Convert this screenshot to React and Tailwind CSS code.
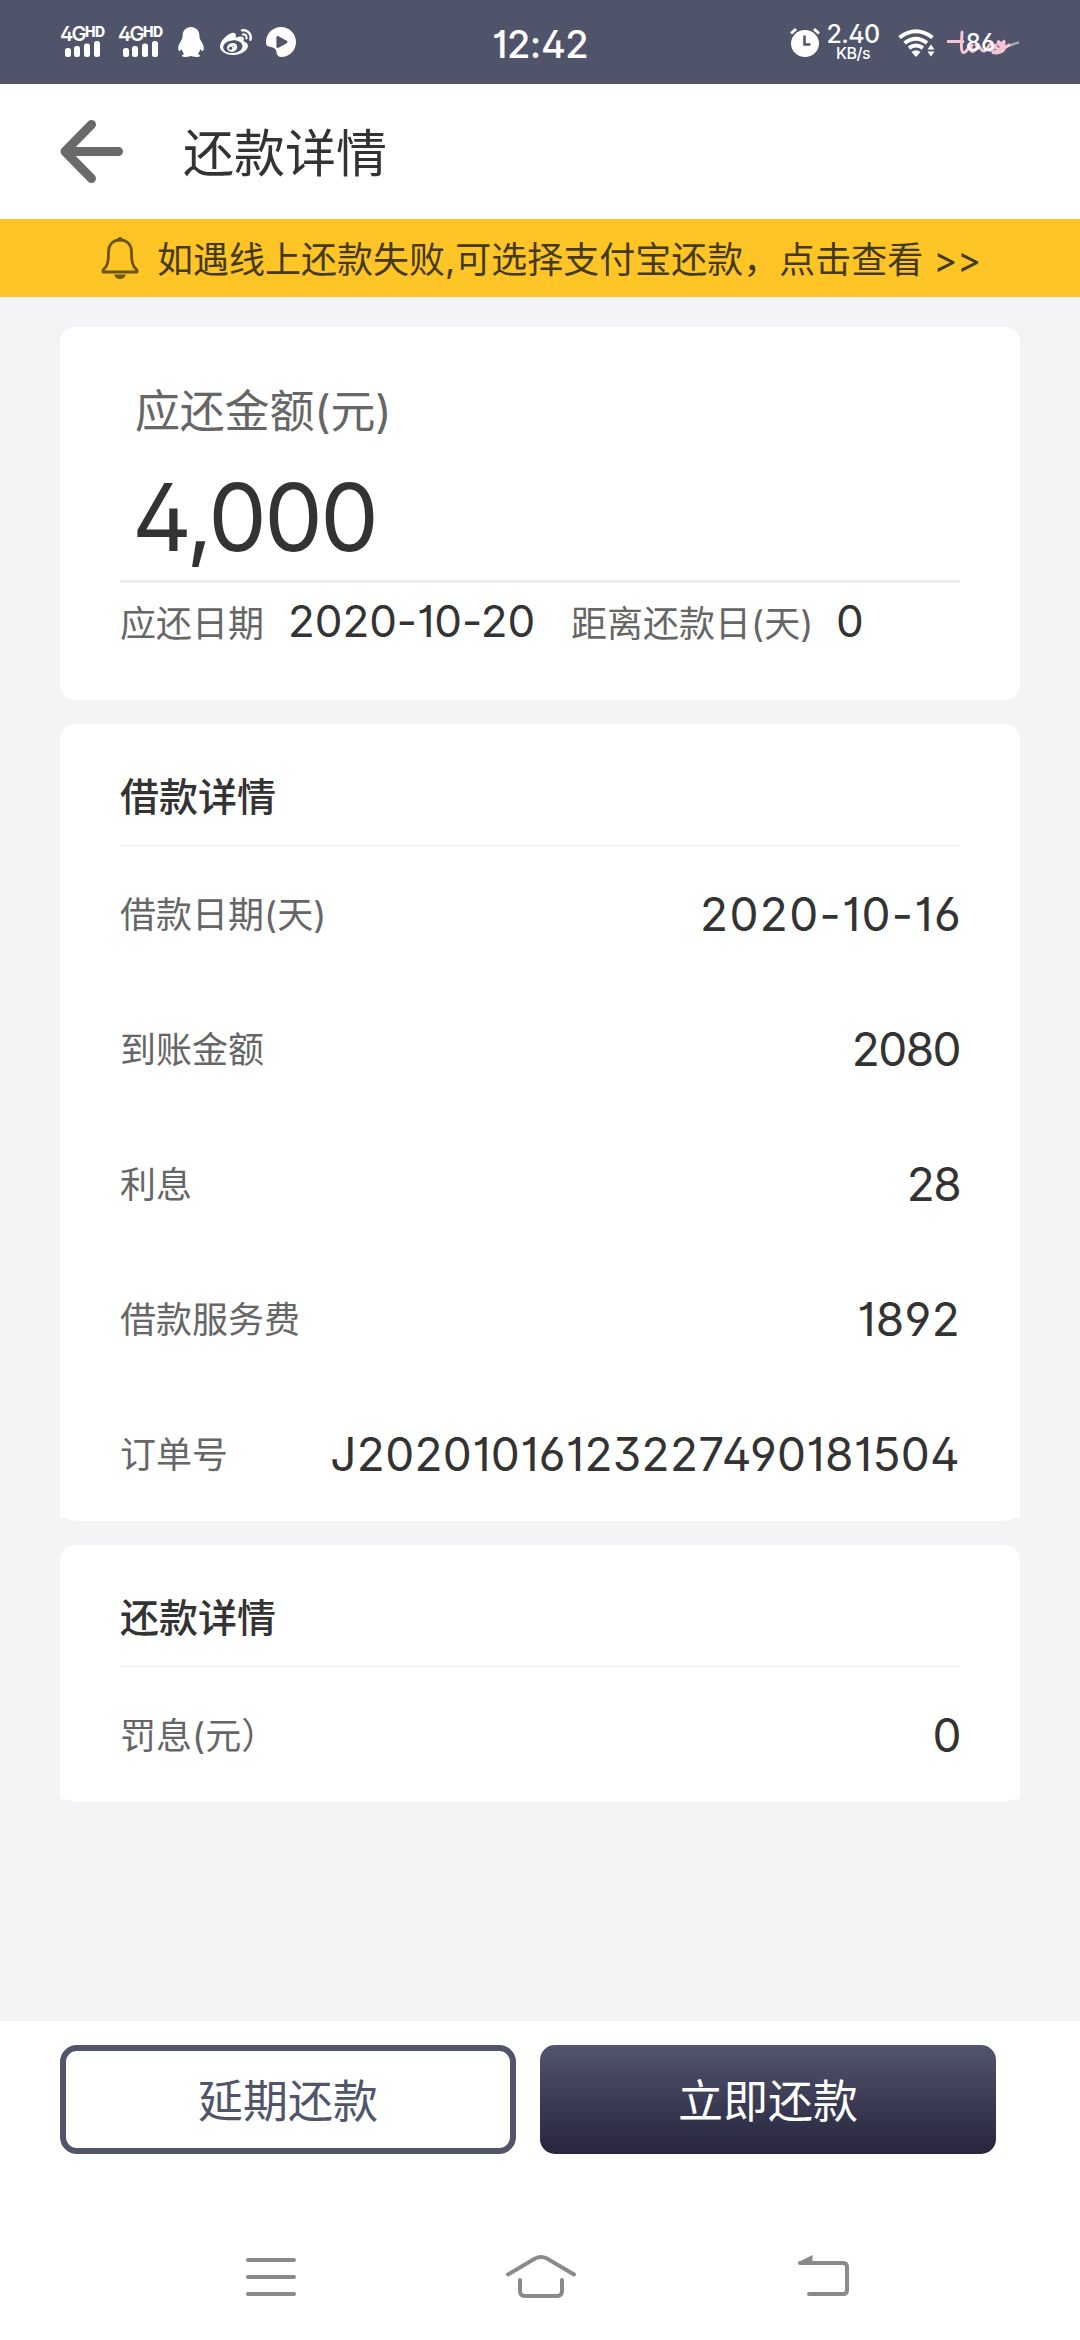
import { FaWeibo } from 'react-icons/fa';

const LOAN_ROWS = [
  { label: '借款日期(天)', value: '2020-10-16', spacing: 'tracking-[1.3px] -mr-[2px]' },
  { label: '到账金额', value: '2080', spacing: 'tracking-[-1.6px]' },
  { label: '利息', value: '28', spacing: 'tracking-[-1.6px]' },
  { label: '借款服务费', value: '1892', spacing: 'tracking-[0.3px]' },
  { label: '订单号', value: 'J20201016123227490181504', spacing: 'tracking-[0.3px]' },
];

const REPAY_ROWS = [{ label: '罚息(元）', value: '0', spacing: 'tracking-[-1.6px]' }];

const Signal = () => (
  <div className="w-[46px] h-[30px] flex flex-col">
    <div className="h-[15px] flex items-start whitespace-nowrap">
      <span className="w-[25px] text-[20px] leading-[15px] font-semibold tracking-[-1.8px]">4G</span>
      <span className="text-[14px] leading-[10px] font-extrabold tracking-[-0.4px]">HD</span>
    </div>
    <svg width="46" height="16" viewBox="0 0 46 16" fill="currentColor" className="-mt-px">
      <rect x="5" y="7" width="6" height="9" rx="2.5" />
      <rect x="14" y="5" width="6" height="11" rx="2.5" />
      <rect x="24" y="2.5" width="6" height="13.5" rx="2.5" />
      <rect x="34" y="0" width="6" height="16" rx="2.5" />
    </svg>
  </div>
);

const PenguinIcon = () => (
  <svg width="26" height="30" viewBox="0 0 26 30" fill="currentColor">
    <path d="M13 0C8 0 4.6 3.6 4.6 8.6c0 1.700-.3 2.900-1 4.400C1.500 16 .2 18.700.2 21.400c0 1.700.6 2.700 1.300 2.500.8-.2 1.500-1 2.200-2 .4 1.900 1.200 3.600 2.500 5-1.400.5-2.200 1.100-2.200 1.900 0 .9 1.500 1.200 3.800 1.200 2.500 0 4.300-.5 5.200-1.200.9.700 2.700 1.200 5.200 1.200 2.300 0 3.800-.3 3.800-1.200 0-.8-.8-1.400-2.200-1.900 1.300-1.400 2.100-3.100 2.500-5 .7 1 1.400 1.800 2.200 2 .7.200 1.300-.8 1.300-2.500 0-2.700-1.300-5.400-3.400-8.400-.7-1.500-1-2.700-1-4.400C21.400 3.600 18 0 13 0z" />
  </svg>
);

const PlayIcon = () => (
  <svg width="30" height="30" viewBox="0 0 30 30" fill="currentColor">
    <path
      fillRule="evenodd"
      d="M15 0C7 0 0 6.500 0 15c0 2.500 1 4.300 3.500 4.800 4 .7 6.500 1.500 6.800 4.700.3 3.500 2 5.500 5.200 5.500C23.500 30 30 23.300 30 15S23.300 0 15 0zM12.500 9.300c-1.200-.6-2.100-.1-2.100 1.200v9c0 1.300.9 1.800 2.100 1.200l8.200-4.500c1.100-.7 1.100-1.700 0-2.400z"
    />
  </svg>
);

const AlarmIcon = () => (
  <svg width="30" height="30" viewBox="0 0 30 30" fill="none">
    <ellipse cx="15" cy="16.500" rx="14" ry="13.500" fill="#fff" />
    <path d="M1 6.500L6 2M29 6.500L24 2" stroke="#fff" strokeWidth="3" />
    <path d="M14.500 8.500V17.500H20.500" stroke="#4f546b" strokeWidth="2.500" />
  </svg>
);

const WifiIcon = () => (
  <svg width="37" height="28" viewBox="0 0 37 28" fill="none" stroke="#fff" strokeWidth="4">
    <path d="M1.500 8.500Q18 -4 34.500 8.500" />
    <path d="M6.500 14Q18 5.500 29 14" />
    <path d="M11 19Q18 14 25 19" />
    <path d="M13.500 23Q18 19.500 22.500 23L18 28z" fill="#fff" stroke="none" />
    <path d="M29.500 20.500L33 15.500L36.500 20.500zM29.500 22.500L33 27.500L36.500 22.500z" fill="#fff" stroke="none" />
  </svg>
);

// battery level over the handwritten theme drawing
const Battery = () => (
  <div className="relative w-[74px] h-[28px] flex items-center justify-center">
    <svg width="74" height="28" viewBox="0 0 74 28" fill="none" className="absolute inset-0">
      <path d="M60 17C64 17 67 14 72 13.500" stroke="#a9a9b4" strokeWidth="2.500" />
      <path
        d="M1 12.500H16M15 3C15 10 13 23 16.500 23.500C20 24 21 17 25 16C22 22 25 24 28 21C31 18 31 16 29 16M31 16C33 18 34 22 37 22C41 22 41 15 44 15C48 15 45 21 42 21C45 22 47 19 49 16C48 21 54 21 58 17C58 22 52 25 46 23.500C52 21 57 20 62 16"
        stroke="#f8c3d4"
        strokeWidth="3"
        strokeLinecap="round"
        strokeLinejoin="round"
      />
      <path d="M54 19C48 15 49 11 52 11L54 13L57 10.500C60 12 59 16 54 19z" fill="#f8c3d4" />
    </svg>
    <span className="relative text-[24px] leading-[28px] font-medium -ml-[7px]">86</span>
  </div>
);

const StatusBar = () => (
  <div className="h-[84px] bg-[#4f546b] text-white flex items-start">
    <div className="flex items-start pt-[27px] pl-[60px] w-[492px]">
      <Signal />
      <div className="w-3" />
      <Signal />
      <div className="pl-[14px]">
        <PenguinIcon />
      </div>
      <div className="pl-[16px]">
        <FaWeibo className="w-[32px] h-[32px]" />
      </div>
      <div className="pl-[14px]">
        <PlayIcon />
      </div>
    </div>
    <div className="w-[298px] pt-[24px] text-[38px] leading-[40px] font-medium tracking-[-0.5px]">12:42</div>
    <div className="pt-[27px]">
      <AlarmIcon />
    </div>
    <div className="w-[78px] pt-[22px] pl-[6px]">
      <div className="w-[54px] flex flex-col items-center">
        <span className="text-[25px] leading-[24px] font-medium tracking-[-0.6px]">2.40</span>
        <span className="text-[16px] leading-[14px] font-medium tracking-[-0.5px]">KB/s</span>
      </div>
    </div>
    <div className="pt-[29px]">
      <WifiIcon />
    </div>
    <div className="pt-[29px] pl-[12px]">
      <Battery />
    </div>
  </div>
);

const Header = () => (
  <div className="h-[135px] bg-white flex items-center pl-[60px]">
    <svg width="64" height="64" viewBox="0 0 64 64" fill="none">
      <path
        d="M31.500 4.500L5 31.500L31.500 58.500M6 31.500H58.500"
        stroke="#6a6a6a"
        strokeWidth="9"
        strokeLinecap="round"
        strokeLinejoin="round"
      />
    </svg>
    <h1 className="ml-[59px] mt-[5px] text-[51px] leading-[60px] text-[#333]">还款详情</h1>
  </div>
);

const Notice = () => (
  <div className="h-[78px] bg-[#ffc426] flex items-center pl-[101px] text-[#443a16]">
    <svg width="38" height="44" viewBox="0 0 38 44" fill="none" className="mr-[18px]">
      <path
        d="M19 4C11.500 4 7.500 9 7.500 16C7.500 25 7 30 2 34V36H36V34C31 30 30.500 25 30.500 16C30.500 9 26.500 4 19 4z"
        stroke="#6b5508"
        strokeWidth="2.800"
        strokeLinejoin="round"
      />
      <path d="M16 4.500Q16 1 19 1Q22 1 22 4.500zM13 38.500H25Q23 43 19 43Q15 43 13 38.500z" fill="#6b5508" />
    </svg>
    <p className="mt-[4px] text-[36px] leading-[44px] whitespace-pre">
      如遇线上还款失败,可选择支付宝还款，点击查看 &gt;&gt;
    </p>
  </div>
);

const AmountCard = () => (
  <div className="h-[373px] bg-white rounded-[15px] px-[60px]">
    <div className="h-[253px] pt-[57px] pl-[15px]">
      <p className="text-[45px] leading-[56px] tracking-[-0.2px] text-[#666]">应还金额(元)</p>
      <p className="-ml-[3px] mt-[25px] text-[93px] leading-[104px] tracking-[-2.6px] text-[#333]">4,000</p>
    </div>
    <div className="h-[3px] bg-[#eee]" />
    <div className="flex pt-[12px] text-[36px] leading-[52px] text-[#666] whitespace-nowrap">
      <span className="w-[168px] pt-[3px]">应还日期</span>
      <span className="w-[283px] text-[44px] tracking-[-0.1px] text-[#333]">2020-10-20</span>
      <span className="w-[265px] pt-[3px]">距离还款日(天)</span>
      <span className="text-[44px] text-[#333]">0</span>
    </div>
  </div>
);

const DetailCard = ({ title, rows, bodyHeight }) => (
  <div className="bg-white rounded-[15px] pb-[3px]">
    <div className="h-[122px] mx-[60px] border-b border-[#ebebeb] pt-[49px]">
      <h2 className="text-[39px] leading-[48px] font-medium text-[#333]">{title}</h2>
    </div>
    <div className={`bg-white px-[60px] ${bodyHeight}`}>
      {rows.map((row) => (
        <div key={row.label} className="h-[135px] pt-[2px] flex items-center justify-between">
          <span className="text-[36px] text-[#666]">{row.label}</span>
          <span className={`text-[46px] text-[#333] ${row.spacing}`}>{row.value}</span>
        </div>
      ))}
    </div>
  </div>
);

const ActionBar = () => (
  <div className="h-[197px] bg-white flex gap-6 pt-6 pl-[60px] text-[45px]">
    <button className="w-[456px] h-[109px] pt-[5px] rounded-[17px] border-[6px] border-[#50556c] text-[#50556c]">
      延期还款
    </button>
    <button className="w-[456px] h-[109px] pt-[5px] rounded-[15px] bg-linear-to-b from-[#50556d] to-[#28253e] text-white">
      立即还款
    </button>
  </div>
);

const NavBar = () => (
  <div className="h-[122px] bg-white flex items-start pt-[36px] pl-[246px]">
    <svg width="50" height="46" viewBox="0 0 50 46" fill="none" stroke="#8a8a8a" strokeWidth="4" strokeLinecap="round">
      <path d="M2 6H48M2 23H48M2 40H48" />
    </svg>
    <svg
      width="72"
      height="46"
      viewBox="0 0 72 46"
      fill="none"
      stroke="#8a8a8a"
      strokeWidth="4"
      strokeLinecap="round"
      className="ml-[209px]"
    >
      <path d="M3 20.500L30 4.500Q36 1.500 42 4.500L69 20.500" />
      <path d="M15 26V37Q15 42 20 42H52Q57 42 57 37V26" />
    </svg>
    <svg
      width="54"
      height="46"
      viewBox="0 0 54 46"
      fill="none"
      stroke="#8a8a8a"
      strokeWidth="4"
      strokeLinecap="round"
      className="ml-[220px]"
    >
      <path d="M3 9H46Q50 9 50 13V36Q50 40 46 40H12" />
      <path d="M1.500 8L15.500 1V10H3z" fill="#8a8a8a" stroke="none" />
    </svg>
  </div>
);

export default function App() {
  return (
    <div className="w-[1080px] h-[2340px] overflow-hidden flex flex-col bg-[#f4f4f7] font-['Inter','Noto_Sans_CJK_SC',sans-serif] [font-feature-settings:'ss01','cv01']">
      <StatusBar />
      <Header />
      <Notice />
      <main className="flex-1 flex flex-col gap-6 px-[60px] pt-[30px]">
        <AmountCard />
        <DetailCard title="借款详情" rows={LOAN_ROWS} bodyHeight="h-[672px]" />
        <DetailCard title="还款详情" rows={REPAY_ROWS} bodyHeight="h-[132px]" />
      </main>
      <ActionBar />
      <NavBar />
    </div>
  );
}
